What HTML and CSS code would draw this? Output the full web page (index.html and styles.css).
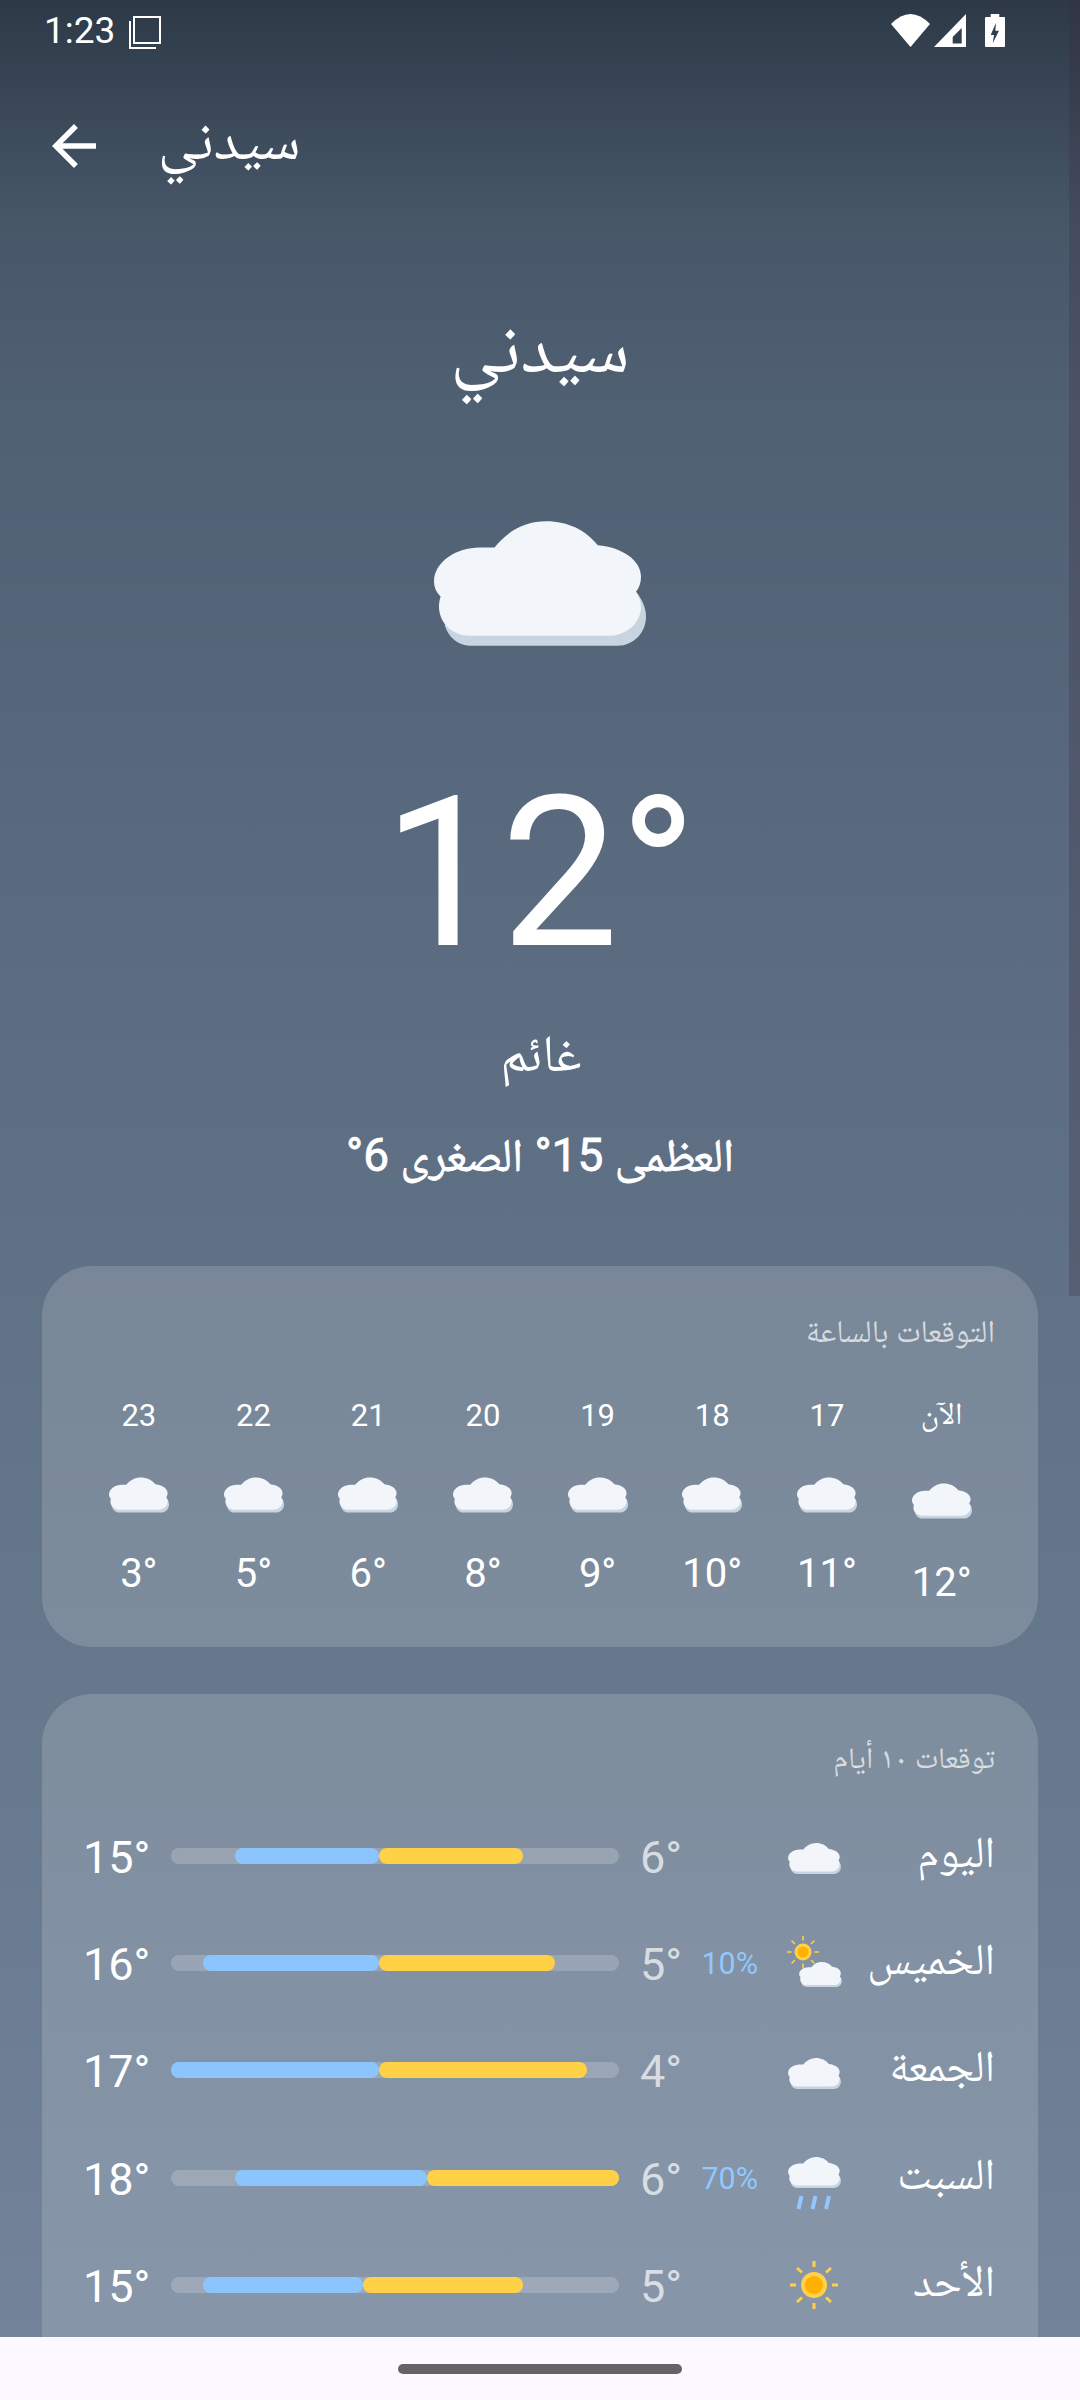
FILE: index.html
```html
<!DOCTYPE html>
<html lang="ar">
<head>
    <meta charset="UTF-8">
    <meta name="viewport" content="width=device-width, initial-scale=1.0">
    <title>سيدني</title>
    <link rel="stylesheet" href="styles.css">
</head>
<body>

    <svg class="defs" aria-hidden="true">
        <symbol id="cloud" viewBox="163 663 637 374">
            <path fill="#c8d4e0" d="M770 875C790 900 800 925 800 950C800 1000 760 1037 715 1037L270 1037C235 1037 205 1010 195 975Z"/>
            <path fill="#f2f5fa" d="M345 742C385 690 440 663 500 663C565 663 620 690 655 735C730 742 785 780 785 830C785 848 780 862 770 875C780 890 785 905 785 920C785 970 740 1007 690 1007L270 1007C220 1007 178 970 178 920C178 908 180 898 183 890C170 877 163 862 163 845C163 785 230 742 300 742C315 742 330 742 345 742Z"/>
        </symbol>
    </svg>

    <main class="screen">
        <div class="scrollbar"></div>

        <div class="status-bar">
            <span class="clock">1:23</span>
            <svg class="recents" width="34" height="34" viewBox="0 0 34 34" fill="none" stroke="#fff" stroke-width="2">
                <rect x="6" y="2" width="26" height="26"/>
                <path d="M2 6V33H28"/>
            </svg>
            <svg class="status-icons" width="115" height="34" viewBox="0 0 115 34" fill="#fff" fill-rule="evenodd">
                <path d="M19.5 33L0 10Q19.5 -10 39 10Z"/>
                <path d="M43 33L75 0V33ZM61.7 29.5H70.7V14L61.7 23Z"/>
                <path d="M99.7 0H108.3V3H113Q114 3 114 4V32Q114 33 113 33H95Q94 33 94 32V4Q94 3 95 3H99.7ZM105 8.7L99.7 21H103L101.7 29.3L108 16.7H104.3Z"/>
            </svg>
        </div>

        <header class="app-bar">
            <svg class="back" width="66" height="66" viewBox="0 0 24 24" fill="#fff">
                <path d="M20 11H7.83l5.59-5.59L12 4l-8 8 8 8 1.41-1.41L7.83 13H20z"/>
            </svg>
            <span class="app-title">سيدني</span>
        </header>

        <h1 class="city">سيدني</h1>
        <svg class="hero-cloud" width="212" height="125"><use href="#cloud"/></svg>
        <div class="temp-now">12°</div>
        <div class="condition">غائم</div>
        <div class="summary" dir="rtl">العظمى 15° الصغرى 6°</div>

        <section class="card card-hours" dir="rtl">
            <h2 class="card-title">التوقعات بالساعة</h2>
            <div class="hours">
                <div class="hour hour-now">
                    <span class="hour-label">الآن</span>
                    <svg class="hour-cloud" width="60" height="36"><use href="#cloud"/></svg>
                    <span class="hour-temp">12°</span>
                </div>
                <div class="hour">
                    <span class="hour-label">17</span>
                    <svg class="hour-cloud" width="60" height="36"><use href="#cloud"/></svg>
                    <span class="hour-temp">11°</span>
                </div>
                <div class="hour">
                    <span class="hour-label">18</span>
                    <svg class="hour-cloud" width="60" height="36"><use href="#cloud"/></svg>
                    <span class="hour-temp">10°</span>
                </div>
                <div class="hour">
                    <span class="hour-label">19</span>
                    <svg class="hour-cloud" width="60" height="36"><use href="#cloud"/></svg>
                    <span class="hour-temp">9°</span>
                </div>
                <div class="hour">
                    <span class="hour-label">20</span>
                    <svg class="hour-cloud" width="60" height="36"><use href="#cloud"/></svg>
                    <span class="hour-temp">8°</span>
                </div>
                <div class="hour">
                    <span class="hour-label">21</span>
                    <svg class="hour-cloud" width="60" height="36"><use href="#cloud"/></svg>
                    <span class="hour-temp">6°</span>
                </div>
                <div class="hour">
                    <span class="hour-label">22</span>
                    <svg class="hour-cloud" width="60" height="36"><use href="#cloud"/></svg>
                    <span class="hour-temp">5°</span>
                </div>
                <div class="hour">
                    <span class="hour-label">23</span>
                    <svg class="hour-cloud" width="60" height="36"><use href="#cloud"/></svg>
                    <span class="hour-temp">3°</span>
                </div>
            </div>
        </section>

        <section class="card card-days" dir="rtl">
            <h2 class="card-title">توقعات ١٠ أيام</h2>

            <div class="day">
                <span class="day-name">اليوم</span>
                <svg class="day-icon" width="60" height="60" viewBox="0 0 60 60"><use href="#cloud" x="4" y="17" width="53" height="31"/></svg>
                <span class="day-rain"></span>
                <span class="day-low">6°</span>
                <div class="bar">
                    <span class="bar-cold" style="margin-left:64px;width:144px"></span>
                    <span class="bar-warm" style="width:144px"></span>
                </div>
                <span class="day-high">15°</span>
            </div>

            <div class="day">
                <span class="day-name">الخميس</span>
                <svg class="day-icon" width="60" height="60" viewBox="0 0 60 60">
                    <g stroke="#ffd04a" stroke-width="1.6" stroke-linecap="round">
                        <path d="M19 3.500V7M19 31V34.500M3.500 19H7M31 19H34.500M8 8L10.500 10.500M27.500 27.500L30 30M8 30L10.500 27.500M27.500 10.500L30 8"/>
                    </g>
                    <circle cx="19" cy="19" r="8.500" fill="#ffd04a"/>
                    <circle cx="19" cy="19" r="5.500" fill="#ffb000"/>
                    <use href="#cloud" x="15" y="29" width="43" height="25"/>
                </svg>
                <span class="day-rain">10%</span>
                <span class="day-low">5°</span>
                <div class="bar">
                    <span class="bar-cold" style="margin-left:32px;width:176px"></span>
                    <span class="bar-warm" style="width:176px"></span>
                </div>
                <span class="day-high">16°</span>
            </div>

            <div class="day">
                <span class="day-name">الجمعة</span>
                <svg class="day-icon" width="60" height="60" viewBox="0 0 60 60"><use href="#cloud" x="4" y="18" width="53" height="31"/></svg>
                <span class="day-rain"></span>
                <span class="day-low">4°</span>
                <div class="bar">
                    <span class="bar-cold" style="margin-left:0;width:208px"></span>
                    <span class="bar-warm" style="width:208px"></span>
                </div>
                <span class="day-high">17°</span>
            </div>

            <div class="day">
                <span class="day-name">السبت</span>
                <svg class="day-icon" width="60" height="60" viewBox="0 0 60 60">
                    <use href="#cloud" x="4" y="9" width="53" height="31"/>
                    <path stroke="#90c8ff" stroke-width="4" d="M17.500 48L14.500 61M31.500 48L28.500 61M45 48L42 61"/>
                </svg>
                <span class="day-rain">70%</span>
                <span class="day-low">6°</span>
                <div class="bar">
                    <span class="bar-cold" style="margin-left:64px;width:192px"></span>
                    <span class="bar-warm" style="width:192px"></span>
                </div>
                <span class="day-high">18°</span>
            </div>

            <div class="day">
                <span class="day-name">الأحد</span>
                <svg class="day-icon" width="60" height="60" viewBox="0 0 60 60">
                    <g stroke="#ffd04a" stroke-width="3">
                        <path d="M30 6V12M30 48V54M6 30H12M48 30H54M13 13L18 17.500M42 42.500L47 47M13 47L18 42.500M42 17.500L47 13"/>
                    </g>
                    <circle cx="30" cy="30" r="13" fill="#ffd04a"/>
                    <circle cx="30" cy="30" r="9" fill="#ffb000"/>
                </svg>
                <span class="day-rain"></span>
                <span class="day-low">5°</span>
                <div class="bar">
                    <span class="bar-cold" style="margin-left:32px;width:160px"></span>
                    <span class="bar-warm" style="width:160px"></span>
                </div>
                <span class="day-high">15°</span>
            </div>
        </section>
    </main>

    <footer class="nav-bar"><div class="nav-pill"></div></footer>

</body>
</html>
```

FILE: styles.css
```css
* {
    box-sizing: border-box;
}
html, body {
    margin: 0;
    width: 1080px;
    height: 2400px;
    overflow: hidden;
}
body {
    font-family: Roboto, "Noto Naskh Arabic", "Noto Sans Arabic", "DejaVu Sans", sans-serif;
    color: #ffffff;
    background-color: #fdf7ff;
}
.defs {
    display: none;
}
.screen {
    position: relative;
    height: 2337px;
    overflow: hidden;
    background: linear-gradient(180deg, #2d3947 0, #475768 220px, #506073 400px, #5c6d82 1000px, #66788c 1680px, #72839a 2337px);
}
.scrollbar {
    position: absolute;
    top: 0;
    right: 0;
    width: 11px;
    height: 1296px;
    background-color: rgba(60, 40, 60, 0.25);
}

/* status bar */
.status-bar {
    display: flex;
    align-items: flex-start;
    height: 63px;
    padding-left: 44px;
}
.clock {
    font-size: 37px;
    line-height: 62px;
}
.recents {
    margin: 15px 0 0 13px;
}
.status-icons {
    margin: 14px 74px 0 auto;
}

/* app bar */
.app-bar {
    display: flex;
    align-items: center;
    height: 166px;
    padding-left: 41px;
}
.app-title {
    font-size: 58px;
    margin-left: 51px;
}

/* hero */
.city {
    margin: 61px 0 0;
    height: 115px;
    font-size: 73px;
    line-height: 115px;
    font-weight: 400;
    text-align: center;
}
.hero-cloud {
    display: block;
    margin: 116px auto 0;
}
.temp-now {
    margin-top: 107px;
    height: 240px;
    font-size: 210px;
    line-height: 240px;
    font-weight: 400;
    text-align: center;
}
.condition {
    margin-top: 31px;
    height: 60px;
    padding-left: 2px;
    font-size: 52px;
    line-height: 60px;
    text-align: center;
}
.summary {
    margin-top: 41px;
    height: 60px;
    font-size: 46px;
    line-height: 60px;
    -webkit-text-stroke: 0.8px #ffffff;
    text-align: center;
}

/* cards */
.card {
    margin: 0 42px;
    padding: 0 39px;
    border-radius: 50px;
    background-color: rgba(255, 255, 255, 0.155);
}
.card-title {
    margin: 0;
    padding: 0 4px;
    height: 40px;
    font-size: 31.5px;
    line-height: 38px;
    font-weight: 400;
    color: rgba(255, 255, 255, 0.7);
}
.card-hours {
    margin-top: 81px;
    height: 381px;
    padding-top: 47px;
}
.card-days {
    margin-top: 47px;
    height: 700px;
    padding-top: 45px;
}
.card-days .card-title {
    font-size: 30px;
}

/* hourly */
.hours {
    display: grid;
    grid-template-columns: repeat(8, 114.7px);
    margin-top: 43px;
}
.hour {
    display: flex;
    flex-direction: column;
    align-items: center;
}
.hour-label {
    height: 40px;
    font-size: 31px;
    line-height: 40px;
}
.hour-now .hour-label {
    line-height: 35px;
}
.hour-cloud {
    display: block;
    margin-top: 41px;
}
.hour-now .hour-cloud {
    margin-top: 47px;
}
.hour-temp {
    direction: ltr;
    margin-top: 41px;
    height: 40px;
    font-size: 40px;
    line-height: 40px;
}
.hour-now .hour-temp {
    margin-top: 44px;
}

/* 10 days */
.day {
    display: grid;
    grid-template-columns: 150px 60px 104px 61px 448px 85px;
    align-items: center;
    height: 107.3px;
    margin: 0 5px;
}
.day:first-of-type {
    margin-top: 23px;
}
.day-name {
    margin-right: -1px;
    padding-bottom: 8px;
    font-size: 44px;
    line-height: 60px;
}
.day-icon {
    display: block;
    overflow: visible;
}
.day-rain {
    direction: ltr;
    padding: 2px 26px 0 0;
    font-size: 30.5px;
    text-align: right;
    color: #90c8ff;
}
.day-low {
    direction: ltr;
    margin-right: -2px;
    padding-top: 3px;
    font-size: 45px;
    text-align: right;
    color: rgba(255, 255, 255, 0.7);
}
.day-high {
    direction: ltr;
    margin-left: -3px;
    padding-top: 3px;
    font-size: 45px;
    text-align: left;
}
.bar {
    direction: ltr;
    display: flex;
    height: 16px;
    border-radius: 8px;
    background-color: rgba(255, 255, 255, 0.19);
}
.bar-cold, .bar-warm {
    display: block;
    height: 16px;
    border-radius: 8px;
}
.bar-cold {
    background-color: #8cc5fd;
}
.bar-warm {
    background-color: #ffd147;
}

/* nav bar */
.nav-bar {
    height: 63px;
    padding-top: 27px;
    background-color: #fdf7ff;
}
.nav-pill {
    width: 284px;
    height: 10px;
    margin: 0 auto;
    border-radius: 5px;
    background-color: #666367;
}
```
